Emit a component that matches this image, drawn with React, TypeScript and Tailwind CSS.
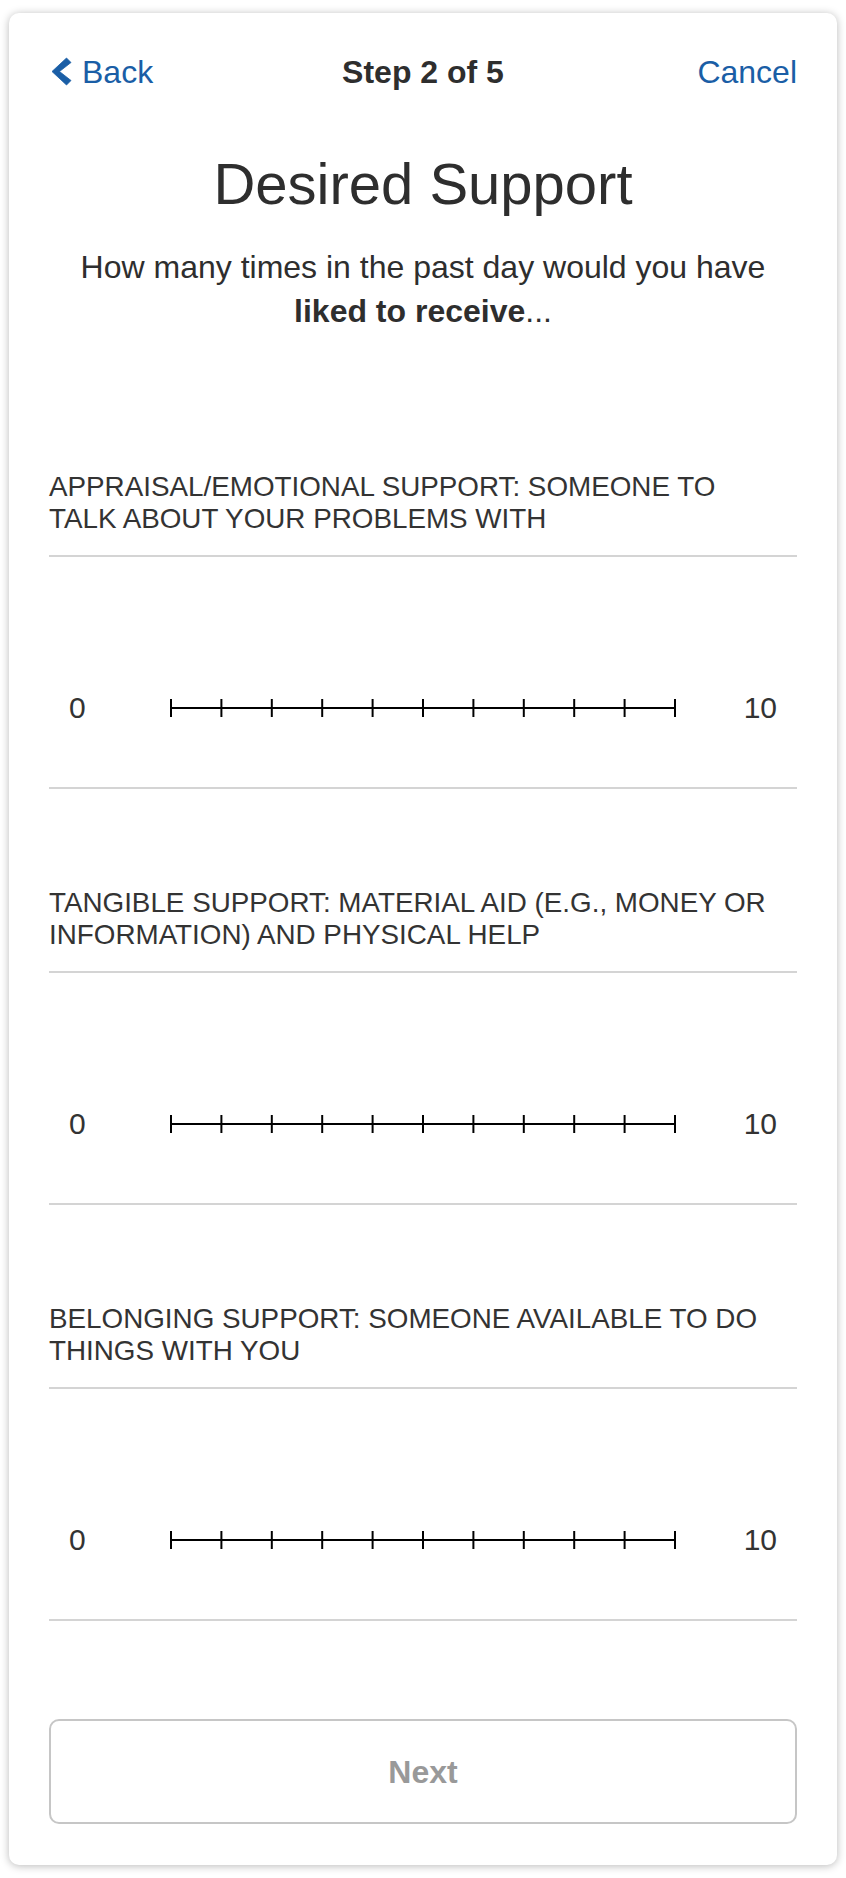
import React from "react";

const FONT = { fontFamily: '"Liberation Sans", Arial, Helvetica, sans-serif' };

const sections = [
  "APPRAISAL/EMOTIONAL SUPPORT: SOMEONE TO TALK ABOUT YOUR PROBLEMS WITH",
  "TANGIBLE SUPPORT: MATERIAL AID (E.G., MONEY OR INFORMATION) AND PHYSICAL HELP",
  "BELONGING SUPPORT: SOMEONE AVAILABLE TO DO THINGS WITH YOU",
];

const ChevronLeft = () => (
  <svg width="24" height="30" viewBox="0 0 24 30" className="shrink-0">
    <polygon
      points="17.5,1 22,5.5 10.5,14.5 22,23.5 17.5,28 3,14.5"
      fill="#1a5ea6"
      strokeLinejoin="round"
      stroke="#1a5ea6"
      strokeWidth="0.8"
    />
  </svg>
);

const TickScale = () => {
  const ticks = Array.from({ length: 11 }, (_, i) => 1 + i * 50.4);
  return (
    <svg width="506" height="18" viewBox="0 0 506 18" className="block">
      <line x1="1" y1="9" x2="505" y2="9" stroke="#000" strokeWidth="2" />
      {ticks.map((x) => (
        <line key={x} x1={x} y1="0" x2={x} y2="18" stroke="#000" strokeWidth="2" />
      ))}
    </svg>
  );
};

const SupportSection = ({ label, first }: { label: string; first: boolean }) => (
  <div className={first ? "" : "mt-[98px]"}>
    {/* Question label */}
    <p className="pr-[16px] text-[27.8px] leading-[32px] text-[#333]">{label}</p>
    <div className="mt-[20px] h-[2px] bg-[#d4d4d4]" />

    {/* Scale 0 - 10 */}
    <div className="pt-[136px] pb-[64px]">
      <div className="flex h-[30px] items-center px-[20px] text-[30px] text-[#333]">
        <span className="leading-none">0</span>
        <div className="ml-[84px] mr-[67px] flex-1">
          <TickScale />
        </div>
        <span className="leading-none">10</span>
      </div>
    </div>
    <div className="h-[2px] bg-[#d4d4d4]" />
  </div>
);

export default function App() {
  return (
    <div className="min-h-screen bg-white px-[9px] pt-[13px]" style={FONT}>
      <div className="rounded-[10px] bg-white px-[40px] pt-[35px] pb-[41px] shadow-[0_1px_9px_rgba(0,0,0,0.28)]">
        {/* Header */}
        <div className="grid h-[48px] grid-cols-[1fr_auto_1fr] items-center text-[32px]">
          <button className="flex items-center gap-[9px] justify-self-start text-[#1a5ea6]">
            <ChevronLeft />
            <span>Back</span>
          </button>
          <span className="font-bold text-[#2e2e2e]">Step 2 of 5</span>
          <button className="justify-self-end text-[#1a5ea6]">Cancel</button>
        </div>

        {/* Title */}
        <h1 className="mt-[55px] text-center text-[58px] leading-[66px] text-[#2e2e2e]">
          Desired Support
        </h1>
        <p className="mt-[28px] text-center text-[32px] leading-[44px] text-[#2e2e2e]">
          How many times in the past day would you have{" "}
          <span className="font-bold">liked to receive</span>...
        </p>

        {/* Questions */}
        <div className="mt-[138px]">
          {sections.map((label, i) => (
            <SupportSection key={label} label={label} first={i === 0} />
          ))}
        </div>

        {/* Next */}
        <button className="mt-[98px] flex h-[105px] w-full items-center justify-center rounded-[10px] border-2 border-[#c6c6c6] text-[32px] font-bold text-[#999]">
          Next
        </button>
      </div>
    </div>
  );
}
